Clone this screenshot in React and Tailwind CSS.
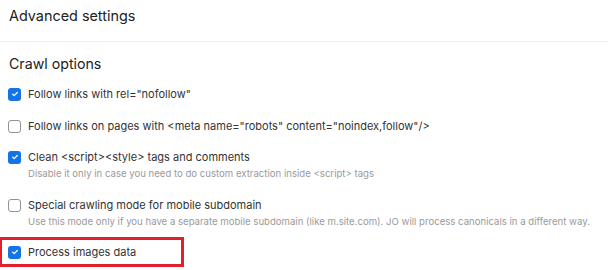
import React from "react";

function Check({ checked }) {
  if (checked) {
    return (
      <span className="flex h-[13px] w-[13px] shrink-0 items-center justify-center rounded-[3px] bg-[#1473e6]">
        <svg width="8" height="8" viewBox="0 0 8 8" fill="none">
          <path d="M1.7 4.3L3.2 5.6L6.3 2.5" stroke="white" strokeWidth="1.3" strokeLinecap="round" strokeLinejoin="round" />
        </svg>
      </span>
    );
  }
  return <span className="h-[13px] w-[13px] shrink-0 rounded-[3px] border border-[#8f9499] bg-white" />;
}

function Row({ checked, label, desc, className = "" }) {
  return (
    <div className={"flex flex-col " + className}>
      <div className="flex h-[16px] items-center gap-[7px]">
        <Check checked={checked} />
        <span className="whitespace-nowrap text-[11px] leading-[16px] text-[#333]">{label}</span>
      </div>
      {desc && (
        <div className="whitespace-nowrap pl-[20px] pt-[1px] text-[9.6px] leading-[16px] text-[#9a9a9a]">{desc}</div>
      )}
    </div>
  );
}

export default function App() {
  return (
    <div className="h-[270px] w-[608px] overflow-hidden bg-white" style={{ fontFamily: "Inter, 'Noto Sans', sans-serif" }}>
      <div className="flex h-[42px] items-start border-b border-[#eeeeee] pl-[9px] pt-[6px]">
        <span className="text-[14.4px] leading-[20px] text-[#222]">Advanced settings</span>
      </div>
      <div className="pl-[8px] pt-[12px]">
        <div className="pl-[1px] text-[14.2px] leading-[20px] text-[#222]">Crawl options</div>
        <Row className="mt-[12px]" checked label={'Follow links with rel="nofollow"'} />
        <Row className="mt-[16px]" label={'Follow links on pages with <meta name="robots" content="noindex,follow"/>'} />
        <Row className="mt-[15px]" checked label={"Clean <script><style> tags and comments"} desc={"Disable it only in case you need to do custom extraction inside <script> tags"} />
        <Row className="mt-[15px]" label={"Special crawling mode for mobile subdomain"} desc={"Use this mode only if you have a separate mobile subdomain (like m.site.com). JO will process canonicals in a different way."} />
      </div>
      <div className="mt-[7px] ml-[-1px] flex h-[30px] w-[185px] items-center border-[3px] border-[#e0202a] pl-[6px]">
        <div className="flex h-[16px] items-center gap-[7px]">
          <Check checked />
          <span className="whitespace-nowrap text-[11px] leading-[16px] text-[#333]">Process images data</span>
        </div>
      </div>
    </div>
  );
}
